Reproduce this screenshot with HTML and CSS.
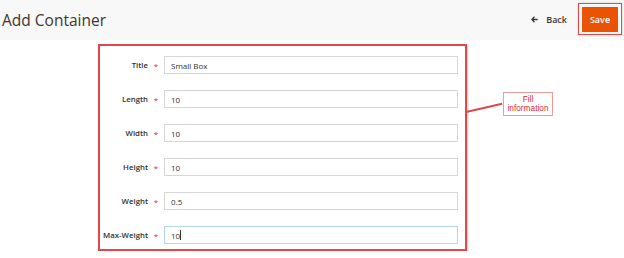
FILE: index.html
```html
<!DOCTYPE html>
<html lang="en">
<head>
    <meta charset="UTF-8">
    <title>Add Container</title>
    <link rel="stylesheet" href="styles.css">
</head>
<body>

    <!-- Page header -->
    <header class="page-header">
        <h1>Add Container</h1>
        <div class="actions">
            <a class="back" href="#">
                <svg class="arrow" width="7" height="7" viewBox="0 0 7 7">
                    <path d="M3.5 0.8 L0.9 3.5 L3.5 6.2 M1 3.5 H6.6" fill="none" stroke="#41362f" stroke-width="1.3"/>
                </svg>
                Back
            </a>
            <span class="save-frame"><button class="save">Save</button></span>
        </div>
    </header>

    <!-- Form -->
    <div class="content">
        <form class="form-box">
            <div class="field">
                <label>Title</label><span class="req">*</span>
                <input class="inp" type="text" value="Small Box">
            </div>
            <div class="field">
                <label>Length</label><span class="req">*</span>
                <input class="inp" type="text" value="10">
            </div>
            <div class="field">
                <label>Width</label><span class="req">*</span>
                <input class="inp" type="text" value="10">
            </div>
            <div class="field">
                <label>Height</label><span class="req">*</span>
                <input class="inp" type="text" value="10">
            </div>
            <div class="field">
                <label>Weight</label><span class="req">*</span>
                <input class="inp" type="text" value="0.5">
            </div>
            <div class="field">
                <label>Max-Weight</label><span class="req">*</span>
                <div class="inp focused">10<span class="caret"></span></div>
            </div>

            <!-- Callout -->
            <span class="callout-line"></span>
            <span class="callout">Fill<br>information</span>
        </form>
    </div>

</body>
</html>
```

FILE: styles.css
```css
body {
    margin: 0;
    font-family: 'Open Sans', 'Noto Sans', Arial, sans-serif;
    background-color: #ffffff;
    color: #303030;
}

/* Header */
.page-header {
    display: flex;
    align-items: center;
    justify-content: space-between;
    height: 40px;
    background-color: #f8f8f8;
    padding: 0 2px 0 2px;
}

.page-header h1 {
    margin: 0;
    font-size: 15.5px;
    font-weight: 400;
    color: #41362f;
}

.actions {
    display: flex;
    align-items: center;
    gap: 11px;
    margin-bottom: 2px;
}

.back {
    display: flex;
    align-items: center;
    gap: 8px;
    font-size: 9px;
    font-weight: 600;
    color: #41362f;
    text-decoration: none;
}

.arrow {
    display: block;
}

.save-frame {
    display: block;
    border: 1.5px solid #e34b4b;
    padding: 2.5px 3px;
    box-shadow: 0 0 2px rgba(0, 0, 0, 0.2);
}

.save {
    display: block;
    width: 36px;
    height: 25px;
    border: 0;
    background-color: #eb5202;
    color: #ffffff;
    font-family: 'Open Sans', Arial, sans-serif;
    font-size: 9px;
    font-weight: 600;
    padding: 0;
}

/* Form */
.content {
    padding: 4px 0 0 98px;
}

.form-box {
    position: relative;
    width: 365px;
    border: 2px solid #e2474c;
    box-shadow: 1px 1px 2px rgba(0, 0, 0, 0.2);
    padding: 10px 0 5px 0;
    display: flex;
    flex-direction: column;
    gap: 16px;
}

.field {
    display: flex;
    align-items: center;
}

.field label {
    flex-shrink: 0;
    width: 48px;
    text-align: right;
    font-size: 7.8px;
    font-weight: 600;
    color: #303030;
    white-space: nowrap;
}

.req {
    flex-shrink: 0;
    width: 16px;
    text-align: center;
    color: #e22626;
    font-size: 8px;
}

.inp {
    box-sizing: border-box;
    width: 294px;
    height: 18px;
    border: 1px solid #d6d6d6;
    padding: 0 6px;
    font-family: 'Open Sans', Arial, sans-serif;
    font-size: 8px;
    color: #303030;
    background: #ffffff;
    outline: none;
}

.inp.focused {
    display: flex;
    align-items: center;
    border-color: #b5d6f2;
}

.caret {
    display: inline-block;
    width: 1px;
    height: 10px;
    background: #303030;
}

/* Annotation */
.callout-line {
    position: absolute;
    left: 366px;
    top: 65px;
    width: 37px;
    height: 1.5px;
    background: #e2474c;
    transform: rotate(-13deg);
    transform-origin: left center;
}

.callout {
    position: absolute;
    left: 403px;
    top: 46px;
    width: 48px;
    height: 22px;
    border: 1px solid #f19a9a;
    font-family: 'Liberation Sans', Arial, sans-serif;
    font-size: 8.3px;
    line-height: 9.5px;
    color: #e2262b;
    text-align: center;
    display: flex;
    align-items: center;
    justify-content: center;
    background: #ffffff;
}
```
